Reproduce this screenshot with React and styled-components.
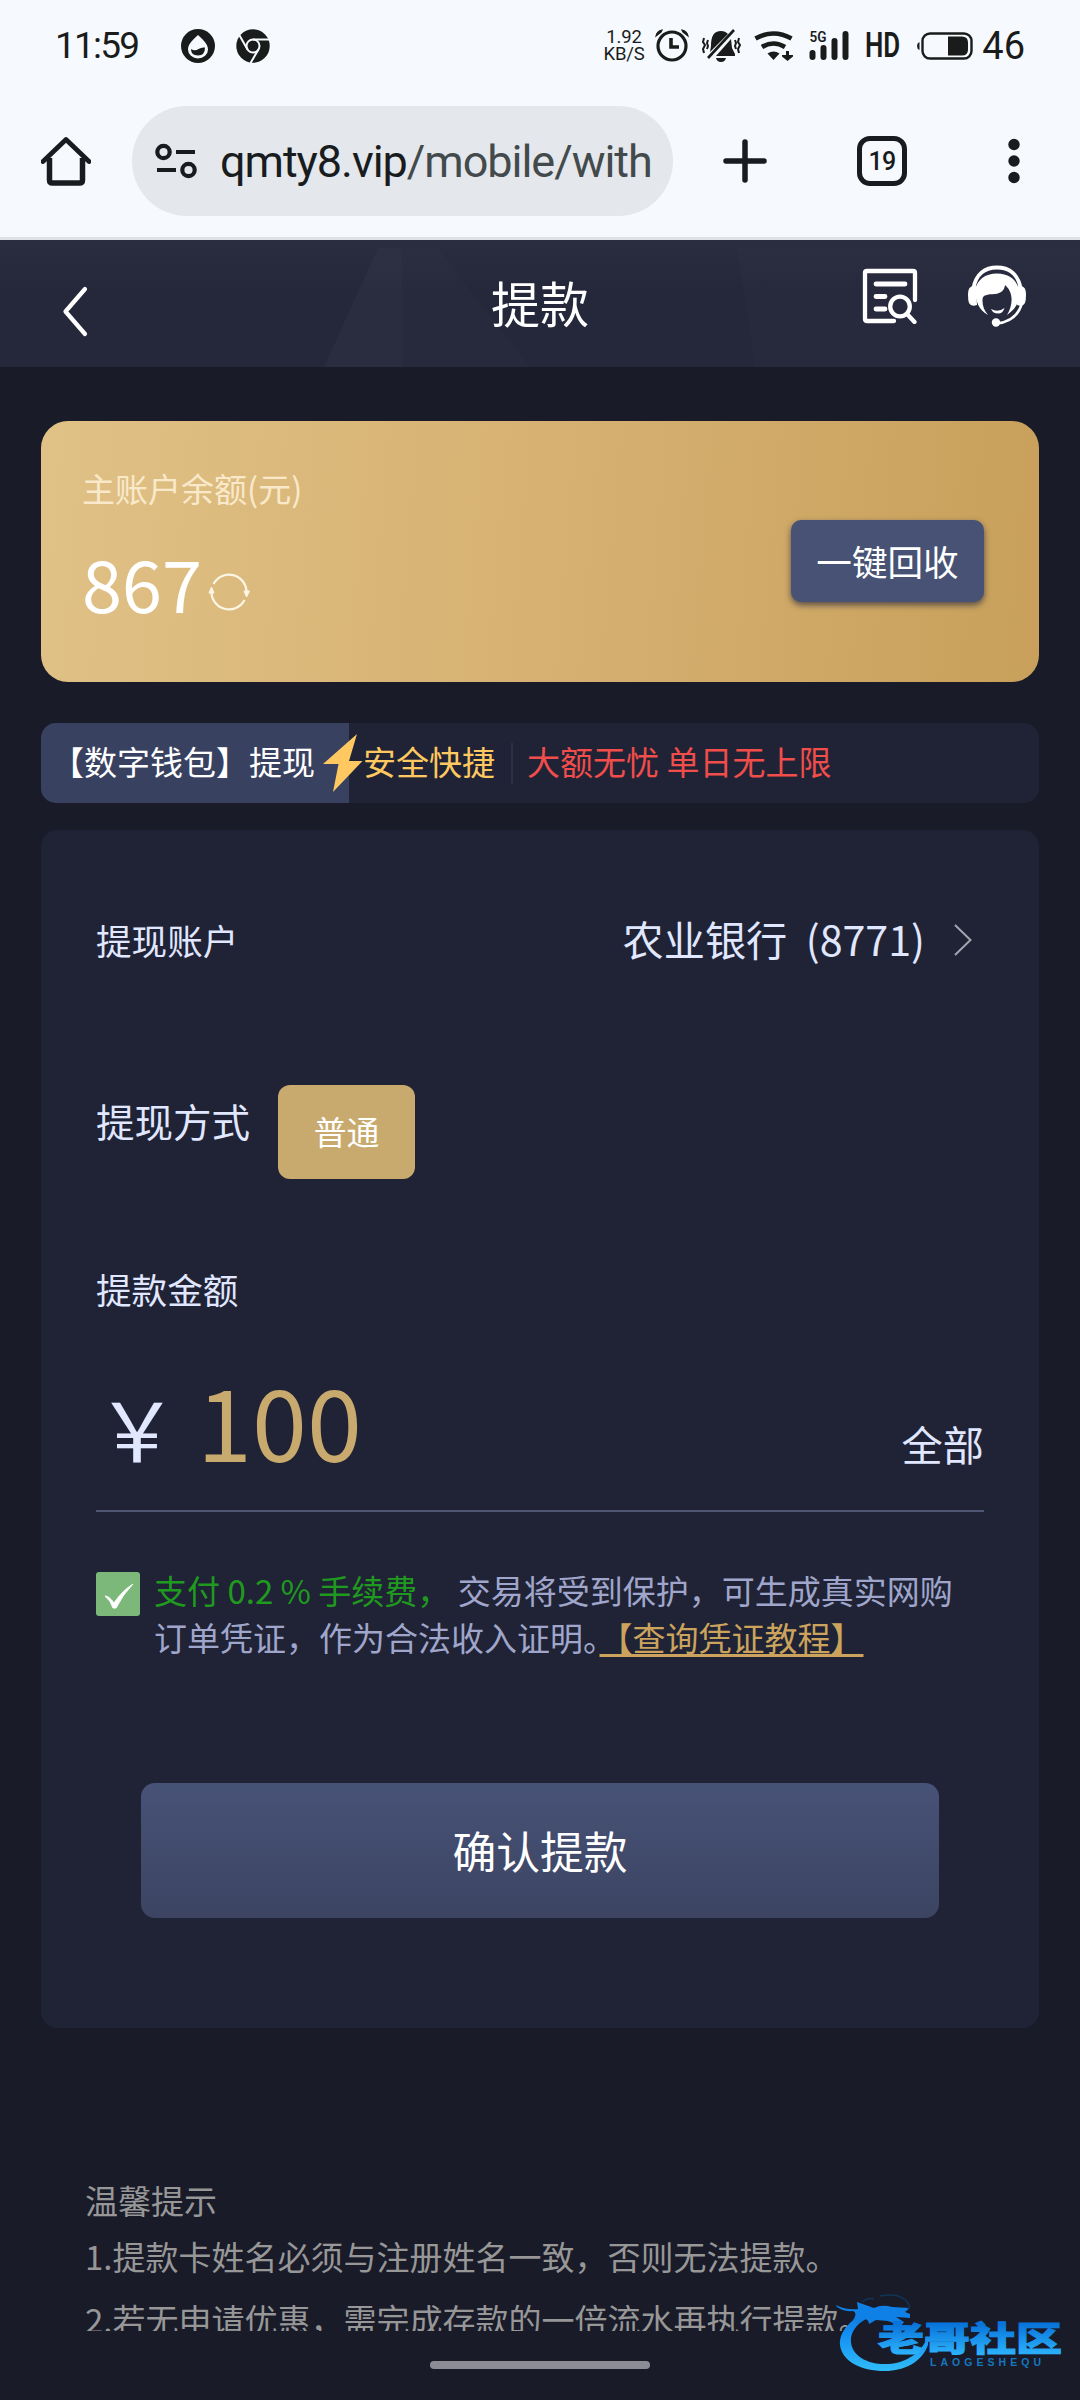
import React from "react";
import styled, { createGlobalStyle } from "styled-components";

const GlobalStyle = createGlobalStyle`
  * {
    box-sizing: border-box;
  }

  body {
    margin: 0;
    background: #191b29;
    font-family: "Noto Sans CJK SC", "Noto Sans", sans-serif;
  }

  svg {
    display: block;
    flex-shrink: 0;
  }
`;

const Screen = styled.div`
  width: 1080px;
  height: 2400px;
  display: flex;
  flex-direction: column;
  overflow: hidden;
  position: relative;
  background: #191b29;
`;

const StatusBar = styled.div`
  height: 92px;
  display: flex;
  align-items: center;
  padding: 0 55px 0 55px;
  background: #f6f9fe;
  color: #1a1c1b;
  font-family: Roboto, sans-serif;
`;

const Clock = styled.span`
  width: 126px;
  font-size: 37px;
  letter-spacing: -1.8px;
  line-height: 94px;
  white-space: nowrap;
`;

const StatusIcons = styled.div`
  display: flex;
  gap: 21px;
`;

const StatusRight = styled.div`
  margin-left: auto;
  display: flex;
  align-items: center;
`;

const NetSpeed = styled.div`
  width: 44px;
  margin-right: 8px;
  text-align: center;
  font-size: 18.5px;
  letter-spacing: -0.2px;
  line-height: 17px;
`;

const HdLabel = styled.span`
  width: 36px;
  margin: 0 16px 0 14px;
  font-size: 35px;
  font-weight: 600;
  transform: scaleX(0.74);
  transform-origin: left center;
  line-height: 92px;
`;

const BatteryLevel = styled.span`
  width: 44px;
  margin-left: 7px;
  font-size: 38px;
  line-height: 92px;
  text-align: right;
`;

const BrowserBar = styled.div`
  height: 148px;
  padding: 14px 59px 21px 41px;
  display: flex;
  align-items: center;
  background: #f6f9fe;
  border-bottom: 3px solid #dee1e6;
  color: #191c1e;
  font-family: Roboto, sans-serif;
`;

const AddressPill = styled.div`
  width: 541px;
  height: 110px;
  margin-left: 41px;
  padding-left: 23px;
  display: flex;
  align-items: center;
  gap: 23px;
  border-radius: 55px;
  background: #e4e7eb;
`;

const Url = styled.span`
  font-size: 45px;
  letter-spacing: -1.05px;
  white-space: nowrap;

  em {
    color: #434a4c;
    font-style: normal;
  }
`;

const NewTabIcon = styled.svg`
  margin-left: 50px;
`;

const MenuIcon = styled.svg`
  margin-left: auto;
`;

const TabCount = styled.div`
  width: 50px;
  height: 50px;
  margin-left: 90px;
  display: flex;
  align-items: center;
  justify-content: center;
  border: 5.5px solid #191c1e;
  border-radius: 13px;
  font-size: 25px;
  font-weight: 500;
  letter-spacing: -0.8px;
`;

const PageHeader = styled.div`
  height: 127px;
  display: grid;
  grid-template-columns: 1fr auto 1fr;
  align-items: center;
  padding: 0 54px;
  color: #fff;
  background: linear-gradient(#2a2c40, #25273b 40%, #25273b);
  position: relative;
`;

const HeaderShade = styled.svg`
  position: absolute;
  top: 0;
  left: 0;
`;

const Title = styled.h1`
  margin: 0;
  padding-bottom: 3px;
  font-size: 49px;
  font-weight: 400;
  line-height: 70px;
  position: relative;
`;

const BackIcon = styled.svg`
  margin: 15px 0 0 7px;
  position: relative;
`;

const HeaderActions = styled.div`
  display: flex;
  justify-content: flex-end;
  align-items: center;
  gap: 50px;
  padding-bottom: 15px;
  position: relative;
`;

const Content = styled.div`
  height: 1964px;
  padding: 54px 41px 0;
  overflow: hidden;
`;

const BalanceCard = styled.div`
  height: 261px;
  padding: 0 55px 0 41px;
  display: flex;
  justify-content: space-between;
  border-radius: 27px;
  background: linear-gradient(95deg, #e0c186 0%, #d6b172 50%, #c8a05b 100%);
  color: #fff;
`;

const BalanceLabel = styled.div`
  margin-top: 43px;
  font-size: 33px;
  line-height: 48px;
  color: #f9e9ca;
`;

const BalanceValue = styled.div`
  display: flex;
  align-items: center;
  margin-top: 20px;
  font-size: 72px;
  line-height: 100px;

  svg {
    margin: 20px 0 0 6px;
  }
`;

const RecycleButton = styled.button`
  width: 193px;
  height: 82px;
  margin-top: 99px;
  padding: 0 0 2px;
  border: 0;
  border-radius: 10px;
  background: #475275;
  box-shadow: 0 3px 6px rgba(35, 38, 60, 0.7);
  color: #fff;
  font-family: inherit;
  font-size: 35.6px;
`;

const WalletBar = styled.div`
  height: 80px;
  margin-top: 41px;
  display: flex;
  align-items: center;
  border-radius: 15px;
  overflow: hidden;
  background: #1f2335;
  font-size: 33px;
  line-height: 77px;
  white-space: nowrap;
`;

const WalletTag = styled.div`
  width: 308px;
  height: 80px;
  padding-left: 10px;
  background: #394161;
  color: #fff;
`;

const Bolt = styled.svg`
  margin: 0 0 0 -26px;
`;

const WalletText = styled.span`
  height: 80px;
  color: ${(props) => props.color};
`;

const Separator = styled.div`
  width: 2px;
  height: 41px;
  margin: 0 14px 0 16px;
  background: #2b3044;
`;

const FormCard = styled.div`
  height: 1198px;
  margin-top: 27px;
  padding: 60px 55px 0;
  border-radius: 16px;
  background: #1f2335;
  color: #e0e7ff;
`;

const AccountRow = styled.div`
  height: 100px;
  display: flex;
  align-items: center;
  justify-content: space-between;
`;

const Label = styled.div`
  font-size: ${(props) => props.size || "35.6px"};
  line-height: ${(props) => props.height || "62px"};
`;

const AccountValue = styled.div`
  display: flex;
  align-items: center;
  padding-right: 11px;
  font-size: 41.2px;
  line-height: 60px;

  span {
    padding-bottom: 5px;
    white-space: pre;
  }

  svg {
    margin-left: 28px;
  }
`;

const MethodRow = styled.div`
  display: flex;
  align-items: flex-start;
  margin: 95px 0 79px;
`;

const MethodBadge = styled.div`
  width: 137px;
  height: 94px;
  margin-left: 28px;
  border-radius: 12px;
  background: #c8aa6f;
  color: #fff;
  font-size: 32.8px;
  line-height: 92px;
  text-align: center;
`;

const AmountRow = styled.div`
  margin-top: 30px;
  padding-bottom: 20px;
  display: flex;
  align-items: flex-end;
  justify-content: space-between;
  border-bottom: 2px solid #4f5673;
`;

const Amount = styled.div`
  height: 140px;
  display: flex;
  align-items: baseline;
  line-height: 138px;
  font-size: 99px;
  color: #c9aa6e;

  span {
    width: 101px;
    font-size: 82px;
    color: #e0e7ff;
  }
`;

const AllButton = styled.div`
  font-size: 41.2px;
  line-height: 94px;
`;

const FeeRow = styled.div`
  display: flex;
  align-items: flex-start;
  gap: 14px;
  margin-top: 55px;

  svg {
    margin-top: 5px;
  }
`;

const FeeText = styled.p`
  width: 820px;
  margin: 0;
  font-size: 33px;
  line-height: 47px;
  color: #a0a6cb;
  white-space: nowrap;
  text-spacing-trim: space-all;
`;

const FeeRate = styled.span`
  color: #1f9a1f;
`;

const HalfStop = styled.span`
  font-feature-settings: "halt";
`;

const GuideLink = styled.a`
  color: #cba35c;
  text-decoration: underline;
  text-decoration-thickness: 3px;
  text-underline-offset: 3px;
  text-decoration-skip-ink: none;
`;

const SubmitButton = styled.button`
  display: block;
  width: 798px;
  height: 135px;
  margin: 122px auto 0;
  padding: 0 0 1px;
  border: 0;
  border-radius: 14px;
  background: linear-gradient(#475277, #3c4462);
  color: #fff;
  font-family: inherit;
  font-size: 43.8px;
`;

const Tips = styled.div`
  margin-top: 148px;
  padding-left: 44px;
  font-size: 33px;
  line-height: 63px;
  color: #979797;
  white-space: nowrap;
`;

const TipsTitle = styled.div`
  line-height: 49px;
`;

const GestureBar = styled.div`
  height: 69px;
  display: flex;
  justify-content: center;
  padding-top: 30px;

  div {
    width: 220px;
    height: 8px;
    border-radius: 4px;
    background: #8b8c95;
  }
`;

const CommunityLogo = styled.svg`
  position: absolute;
  left: 836px;
  top: 2290px;
`;

function StatusGlyphs() {
  return (
    <svg width="197" height="40" viewBox="655 26 197 40" fill="#1a1c1b">
      {/* alarm */}
      <circle cx="673" cy="46" r="14" fill="none" stroke="#1a1c1b" strokeWidth="3.2" />
      <path d="M672 38v9h8" fill="none" stroke="#1a1c1b" strokeWidth="3.6" />
      <path d="M657 36q1-5 6-6l-1 2zM689 36q-1-5-6-6l1 2z" stroke="#1a1c1b" strokeWidth="1.2" />
      {/* muted bell */}
      <path d="M712 46c0-10 3-15 10-15 3 0 5 1 7 3l-18 18zM732 39l1 9 3 6v2h-19z" />
      <path d="M717 58h10q-1 4-5 4t-5-4z" />
      <path d="M709 58l26-28" stroke="#1a1c1b" strokeWidth="2.6" />
      <path
        d="M705 38l-1 4 2 3-2 4 1 4M709 40l-1 3 1 3-1 3M740 38l-1 4 2 3-2 4 1 4M736 40l1 3-1 3 1 3"
        fill="none"
        stroke="#1a1c1b"
        strokeWidth="2"
      />
      {/* wifi */}
      <g fill="none" stroke="#1a1c1b" strokeWidth="4.6">
        <path d="M756.500 38.500q18-10 36 0" />
        <path d="M763 47q11.500-7 23 0" />
      </g>
      <path d="M768.500 53.500q6-4 12 0l-6 6.500z" />
      <path d="M787 51h3v4h4v1.500l-5.500 4.500-5.500-4.500v-1.500h4z" />
      {/* signal */}
      <rect x="810.500" y="50" width="6" height="10" rx="3" />
      <rect x="821.500" y="45" width="6" height="15" rx="3" />
      <rect x="832.500" y="38" width="6" height="22" rx="3" />
      <rect x="843.500" y="31" width="6" height="29" rx="3" />
      <text x="810.500" y="42" fontSize="15" fontWeight="600" fontFamily="Roboto" textLength="17" lengthAdjust="spacingAndGlyphs">
        5G
      </text>
    </svg>
  );
}

function Battery() {
  return (
    <svg width="57" height="28" viewBox="0 0 57 28">
      <rect x="5.500" y="1.500" width="49" height="25" rx="7.500" fill="none" stroke="#1a1c1b" strokeWidth="2.400" />
      <path d="M31 4.500h14q6 0 6 6v7q0 6-6 6H31z" fill="#1a1c1b" />
      <path d="M2.500 10v8q-2.500-1-2.500-4t2.500-4z" fill="#1a1c1b" />
    </svg>
  );
}

function RecordsIcon() {
  return (
    <svg width="56" height="56" viewBox="0 0 56 56" fill="none" stroke="#fff" strokeWidth="4.300" strokeLinecap="round">
      <path d="M53 32V5q0-2-2-2H5q-2 0-2 2v46q0 2 2 2h27" strokeLinejoin="round" />
      <path d="M14 16h29M14 28.500h9M14 41h9" strokeWidth="4.800" />
      <circle cx="38" cy="38.500" r="9.800" />
      <path d="M46 47l6.500 7" />
    </svg>
  );
}

function ServiceIcon() {
  return (
    <svg width="58" height="62" viewBox="0 0 58 62" fill="#fff">
      <path d="M5.500 23C8 9 17 2.500 29 2.500S50 9 52.500 23" fill="none" stroke="#fff" strokeWidth="3.800" />
      <path d="M8 21.500Q4 20 1.500 23 0 25 0 30t1 8q2 4 8 2zM50 21.500q4-1.500 6.500 1.500 1.500 2 1.500 7t-1 8q-2 4-8 2z" />
      <path d="M7 25C9 15 17 8.500 29 8.500S49 15 51 25c1 11-2 18-12 25 3-5 5-11 4.500-17-.5-6-3-10-6.500-13-.5 5-4 8.500-10 9-8 .5-13 .5-12.500 7 0 5 2 10 5.500 14C11 45 8 38 7 25z" />
      <path d="M23 44q7 4 13.500-1-1.500 5.500-6.500 5.500T23 44z" />
      <path d="M54 38c-3 11-11 19-25 20.500" fill="none" stroke="#fff" strokeWidth="2.600" />
      <circle cx="28" cy="57.500" r="4.200" />
    </svg>
  );
}

function RefreshIcon() {
  return (
    <svg width="42" height="40" viewBox="0 0 42 40" fill="none" stroke="#fdf6e6" strokeWidth="2.200">
      <path d="M5.500 12A17.500 17.500 0 0 1 38.500 20" />
      <path d="M36.500 28A17.500 17.500 0 0 1 3.500 19" />
      <path d="M36 19h5.500l-3 6zM1 21h5l-2.500-6z" fill="#fdf6e6" strokeWidth="1" />
    </svg>
  );
}

function Logo() {
  return (
    <CommunityLogo width="228" height="86" viewBox="0 0 228 86">
      <defs>
        <linearGradient id="wave" x1="0" y1="14" x2="0" y2="82" gradientUnits="userSpaceOnUse">
          <stop offset="0" stopColor="#0f6fd0" />
          <stop offset="0.4" stopColor="#118cf2" />
          <stop offset="1" stopColor="#31bdf8" />
        </linearGradient>
        <linearGradient id="word" x1="0" y1="34" x2="0" y2="64" gradientUnits="userSpaceOnUse">
          <stop offset="0" stopColor="#0873da" />
          <stop offset="1" stopColor="#2cb2fb" />
        </linearGradient>
      </defs>
      <path
        d="M33 21C14 29 3 42 4 55c2 16 20 26 45 26 19 0 37-9 43-26V46C86 62 71 73 52 74 32 75 16 66 15 52c-1-10 6-18 15-23z"
        fill="url(#wave)"
      />
      <path
        d="M2 16q9 4 20 3l-1-7 17 6q8-4 18-1l18 1-5 4 5 2v4l-14-1 8 5-3 4-13-5-12-1-7 4q0-4-4-5l-8 5 1-6-5 2q5-7 0-9-12 1-18-6z"
        fill="#0f80e6"
      />
      <path d="M26 12q6-5 12-3M44 6q16-3 24 3 8 6 4 11" fill="none" stroke="#123458" strokeWidth="1.500" />
      <text
        x="42"
        y="61"
        fontSize="34"
        fontWeight="900"
        fontFamily="Noto Sans CJK SC"
        fill="url(#word)"
        stroke="url(#word)"
        strokeWidth="1"
        textLength="184"
        lengthAdjust="spacingAndGlyphs"
      >
        老哥社区
      </text>
      <text x="94" y="75.500" fontSize="10.500" fontWeight="700" fontFamily="Liberation Sans" fill="#1577bd" textLength="111" lengthAdjust="spacing">
        LAOGESHEQU
      </text>
    </CommunityLogo>
  );
}

export default function App() {
  return (
    <Screen>
      <GlobalStyle />

      <StatusBar>
        <Clock>11:59</Clock>
        <StatusIcons>
          <svg width="34" height="34" viewBox="0 0 34 34">
            <circle cx="17" cy="17" r="17" fill="#1a1c1b" />
            <path d="M17 6c5 5 10 9 10 14.500a10 9 0 0 1-20 0C7 15 12 11 17 6z" fill="#f6f9fe" />
            <path d="M10 20q4 2.500 7.500 0 3-2 6.500-1.500 0 8-7 8t-7-6.500z" fill="#1a1c1b" />
          </svg>
          <svg width="34" height="34" viewBox="0 0 34 34">
            <circle cx="17" cy="17" r="16.700" fill="#1a1c1b" />
            <g stroke="#f6f9fe" strokeWidth="2" fill="none">
              <circle cx="17" cy="17" r="6.500" />
              <path d="M17 10.500h17M11.500 20.500L3 5.500M22.500 20.500L14.500 34" />
            </g>
          </svg>
        </StatusIcons>
        <StatusRight>
          <NetSpeed>
            <div>1.92</div>
            <div>KB/S</div>
          </NetSpeed>
          <StatusGlyphs />
          <HdLabel>HD</HdLabel>
          <Battery />
          <BatteryLevel>46</BatteryLevel>
        </StatusRight>
      </StatusBar>

      <BrowserBar>
        <svg width="50" height="50" viewBox="0 0 50 50" fill="none" stroke="#191c1e" strokeWidth="5.500">
          <path d="M8.500 22v22q0 3 3 3h27q3 0 3-3V22" />
          <path d="M2 25.500L25 3.500l23 22" strokeLinejoin="round" strokeLinecap="round" strokeWidth="4.800" />
        </svg>
        <AddressPill>
          <svg width="42" height="36" viewBox="0 0 42 36" fill="none" stroke="#191c1e" strokeWidth="4.200">
            <circle cx="8.500" cy="9" r="6.200" />
            <path d="M21 9h19M2 27h19" />
            <circle cx="33.500" cy="27" r="6.200" />
          </svg>
          <Url>
            qmty8.vip<em>/mobile/with</em>
          </Url>
        </AddressPill>
        <NewTabIcon width="44" height="44" viewBox="0 0 44 44" stroke="#191c1e" strokeWidth="5.500" strokeLinecap="round">
          <path d="M22 3v38M3 22h38" />
        </NewTabIcon>
        <TabCount>19</TabCount>
        <MenuIcon width="14" height="46" viewBox="0 0 14 46" fill="#191c1e">
          <circle cx="7" cy="6.500" r="5.700" />
          <circle cx="7" cy="23" r="5.700" />
          <circle cx="7" cy="39.500" r="5.700" />
        </MenuIcon>
      </BrowserBar>

      <PageHeader>
        <HeaderShade width="1080" height="127" viewBox="0 0 1080 127" fill="#fff">
          <path d="M378 8h24v119h-78z" opacity="0.025" />
          <path d="M402 8h36l92 119H402zM737 8h343v119H755z" opacity="0.01" />
        </HeaderShade>
        <BackIcon width="30" height="52" viewBox="0 0 30 52" fill="none" stroke="#fff" strokeWidth="4.200" strokeLinecap="round" strokeLinejoin="round">
          <path d="M24 4L4.500 26.500 24 49" />
        </BackIcon>
        <Title>提款</Title>
        <HeaderActions>
          <RecordsIcon />
          <ServiceIcon />
        </HeaderActions>
      </PageHeader>

      <Content>
        <BalanceCard>
          <div>
            <BalanceLabel>主账户余额(元)</BalanceLabel>
            <BalanceValue>
              867
              <RefreshIcon />
            </BalanceValue>
          </div>
          <RecycleButton>一键回收</RecycleButton>
        </BalanceCard>

        <WalletBar>
          <WalletTag>【数字钱包】提现</WalletTag>
          <Bolt width="40" height="58" viewBox="0 0 40 58" fill="#ffc861">
            <path d="M34 0L0 30h15.500L10 58l29.500-31H26z" />
          </Bolt>
          <WalletText color="#ffc861">安全快捷</WalletText>
          <Separator />
          <WalletText color="#f04d4b">大额无忧 单日无上限</WalletText>
        </WalletBar>

        <FormCard>
          <AccountRow>
            <Label>提现账户</Label>
            <AccountValue>
              <span>农业银行&nbsp;&nbsp;(8771)</span>
              <svg width="20" height="34" viewBox="0 0 20 34" fill="none" stroke="#a3a5ae" strokeWidth="2">
                <path d="M2 2l15.500 15L2 32" />
              </svg>
            </AccountValue>
          </AccountRow>

          <MethodRow>
            <Label size="38.5px" height="70px">
              提现方式
            </Label>
            <MethodBadge>普通</MethodBadge>
          </MethodRow>

          <Label>提款金额</Label>
          <AmountRow>
            <Amount>
              <span>￥</span>100
            </Amount>
            <AllButton>全部</AllButton>
          </AmountRow>

          <FeeRow>
            <svg width="44" height="44" viewBox="0 0 44 44">
              <rect width="44" height="44" rx="3" fill="#7bb87a" />
              <path d="M9 24q4 0 9 7 8-12 19-19-10 10-17 24h-3q-2-7-8-12z" fill="#fff" stroke="#fff" />
            </svg>
            <FeeText>
              <FeeRate>支付 0.2 % 手续费，</FeeRate> 交易将受到保护，可生成真实网购
              <br />
              订单凭证，作为合法收入证明<HalfStop>。</HalfStop>
              <GuideLink>【查询凭证教程】</GuideLink>
            </FeeText>
          </FeeRow>

          <SubmitButton>确认提款</SubmitButton>
        </FormCard>

        <Tips>
          <TipsTitle>温馨提示</TipsTitle>
          <div>1.提款卡姓名必须与注册姓名一致，否则无法提款。</div>
          <div>2.若无申请优惠，需完成存款的一倍流水再执行提款。</div>
        </Tips>
      </Content>

      <GestureBar>
        <div />
      </GestureBar>

      <Logo />
    </Screen>
  );
}
